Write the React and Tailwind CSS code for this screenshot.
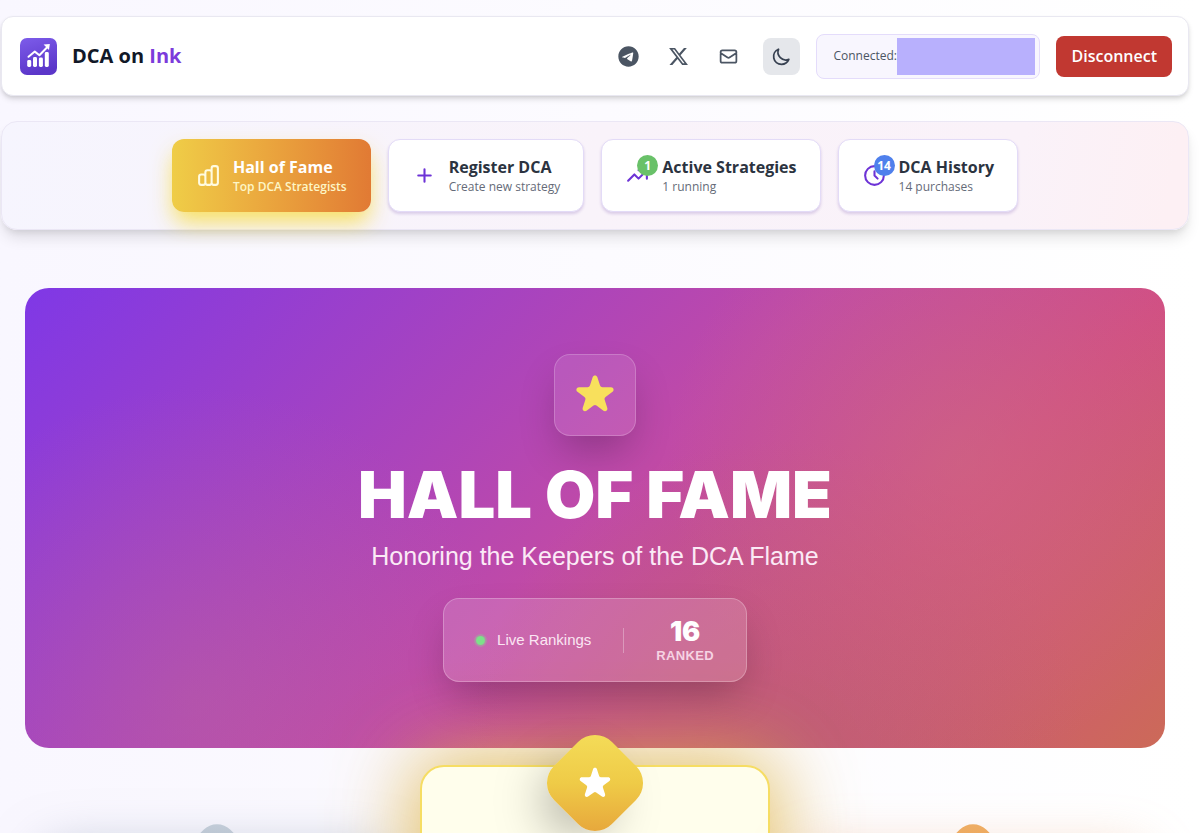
import React from "react";
import { FaTelegram, FaXTwitter } from "react-icons/fa6";

function Outline({ d, className }) {
  return (
    <svg
      viewBox="0 0 24 24"
      fill="none"
      stroke="currentColor"
      strokeWidth="2"
      strokeLinecap="round"
      strokeLinejoin="round"
      className={className}
      aria-hidden="true"
    >
      <path d={d} />
    </svg>
  );
}

function Star({ className }) {
  return (
    <svg viewBox="0 0 20 20" fill="currentColor" className={className} aria-hidden="true">
      <path d="M9.049 2.927c.3-.921 1.603-.921 1.902 0l1.07 3.292a1 1 0 00.95.69h3.462c.969 0 1.371 1.24.588 1.81l-2.8 2.034a1 1 0 00-.364 1.118l1.07 3.292c.3.921-.755 1.688-1.54 1.118l-2.8-2.034a1 1 0 00-1.175 0l-2.8 2.034c-.784.57-1.838-.197-1.539-1.118l1.07-3.292a1 1 0 00-.364-1.118L2.98 8.72c-.783-.57-.38-1.81.588-1.81h3.461a1 1 0 00.951-.69l1.07-3.292z" />
    </svg>
  );
}

const icons = {
  mail: "M3 8l7.89 5.26a2 2 0 002.22 0L21 8M5 19h14a2 2 0 002-2V7a2 2 0 00-2-2H5a2 2 0 00-2 2v10a2 2 0 002 2z",
  moon: "M20.354 15.354A9 9 0 018.646 3.646 9.003 9.003 0 0012 21a9.003 9.003 0 008.354-5.646z",
  chart:
    "M9 19v-6a2 2 0 00-2-2H5a2 2 0 00-2 2v6a2 2 0 002 2h2a2 2 0 002-2zm0 0V9a2 2 0 012-2h2a2 2 0 012 2v10m-6 0a2 2 0 002 2h2a2 2 0 002-2m0 0V5a2 2 0 012-2h2a2 2 0 012 2v14a2 2 0 01-2 2h-2a2 2 0 01-2-2z",
  plus: "M12 6v6m0 0v6m0-6h6m-6 0H6",
  trend: "M13 7h8m0 0v8m0-8l-8 8-4-4-6 6",
  clock: "M12 8v4l3 3m6-3a9 9 0 11-18 0 9 9 0 0118 0z",
};

function Logo() {
  return (
    <svg viewBox="0 0 37 37" className="size-[37px] shrink-0" aria-hidden="true">
      <defs>
        <linearGradient id="logo-fill" x1="0" y1="0" x2="0.3" y2="1">
          <stop offset="0" stopColor="#7d5cea" />
          <stop offset="1" stopColor="#5b36c9" />
        </linearGradient>
      </defs>
      <rect width="37" height="37" rx="7" fill="url(#logo-fill)" />
      <g fill="#fff">
        <rect x="7.2" y="22" width="4" height="7" rx="1.4" />
        <rect x="13" y="19" width="4" height="10" rx="1.4" />
        <rect x="18.9" y="19.5" width="4" height="9.5" rx="1.4" />
        <rect x="24.8" y="14" width="4" height="15" rx="1.4" />
        <path d="M23.6 6.6l6.2-.7-.8 6.2z" />
      </g>
      <path
        d="M8.5 18.8l6.3-5.2 4.6 3.6 8-8.2"
        fill="none"
        stroke="#fff"
        strokeWidth="2"
        strokeLinecap="round"
        strokeLinejoin="round"
      />
    </svg>
  );
}

function IconLink({ label, children }) {
  return (
    <a href="#" aria-label={label} className="flex size-[37px] items-center justify-center rounded-lg text-[#4b5563]">
      {children}
    </a>
  );
}

function Header() {
  return (
    <header className="flex h-20 items-center justify-between rounded-xl border border-[#e9e8f1] bg-white pr-4 pl-[18px] shadow-[0_4px_6px_-1px_rgb(0_0_0/0.12),0_2px_4px_-1px_rgb(0_0_0/0.1)]">
      <div className="flex items-center gap-[15px]">
        <Logo />
        <span className="text-[20px] font-bold text-[#111827]">
          DCA on <span className="text-[#7c3bdb]">Ink</span>
        </span>
      </div>
      <div className="flex items-center gap-4">
        <div className="flex items-center gap-[13px]">
          <IconLink label="Telegram">
            <FaTelegram className="size-[21px]" />
          </IconLink>
          <IconLink label="X">
            <FaXTwitter className="size-[21px]" />
          </IconLink>
          <IconLink label="Email">
            <Outline d={icons.mail} className="size-[21px]" />
          </IconLink>
        </div>
        <button
          type="button"
          aria-label="Dark mode"
          className="flex size-[37px] items-center justify-center rounded-lg bg-[#e5e7eb] text-[#374151]"
        >
          <Outline d={icons.moon} className="size-[21px]" />
        </button>
        <div className="flex h-[45px] items-center rounded-lg border border-[#e4dcfb] bg-[#f8f6fe] pr-1 pl-4">
          <span className="w-16 text-[12px] text-[#4b5563]">Connected:</span>
          <span className="h-[37px] w-[138px] bg-[#b8b0fd]" />
        </div>
        <button type="button" className="h-[41px] rounded-lg bg-[#c13831] px-[15px] text-[16px] font-semibold text-white">
          Disconnect
        </button>
      </div>
    </header>
  );
}

function Tab({ icon, title, note, badge, badgeClass }) {
  return (
    <button
      type="button"
      className="flex h-[73px] items-center gap-3 rounded-xl border border-[#e3dbf7] bg-white px-[23px] text-left shadow-[0_2px_3px_rgb(76_29_149/0.18)]"
    >
      <span className="relative text-[#6d33d6]">
        <Outline d={icons[icon]} className="size-[25px]" />
        {badge && (
          <span
            className={
              "absolute -top-2 -right-2 flex size-[21px] items-center justify-center rounded-full text-[12px] font-bold text-white " +
              badgeClass
            }
          >
            {badge}
          </span>
        )}
      </span>
      <span className="flex flex-col pt-0.5">
        <span className="text-[16px] leading-5 font-bold text-[#2b3340]">{title}</span>
        <span className="text-[12px] leading-5 font-medium text-[#656b78]">{note}</span>
      </span>
    </button>
  );
}

function Tabs() {
  return (
    <nav className="flex h-[109px] items-center justify-center gap-[17px] rounded-2xl border border-[#ebe7f5] bg-[linear-gradient(100deg,#f6f5fe_0%,#f9f3fa_50%,#faf2f9_85%,#fdf0f4_98%)] shadow-[0_10px_15px_-3px_rgb(0_0_0/0.12),0_4px_6px_-2px_rgb(0_0_0/0.08)]">
      <button
        type="button"
        className="flex h-[73px] items-center gap-3 rounded-xl bg-linear-to-r from-[#efcd47] to-[#e17a34] px-6 text-left shadow-[0_12px_22px_-2px_rgb(247_222_80/0.9)]"
      >
        <Outline d={icons.chart} className="size-[25px] text-[#fffbe0]" />
        <span className="flex flex-col pt-0.5">
          <span className="text-[16px] leading-5 font-bold text-white">Hall of Fame</span>
          <span className="text-[12px] leading-5 font-semibold text-[#fdf6c6]">Top DCA Strategists</span>
        </span>
      </button>
      <Tab icon="plus" title="Register DCA" note="Create new strategy" />
      <Tab icon="trend" title="Active Strategies" note="1 running" badge="1" badgeClass="bg-[#69c169]" />
      <Tab icon="clock" title="DCA History" note="14 purchases" badge="14" badgeClass="bg-[#4f80ec]" />
    </nav>
  );
}

function Hero() {
  return (
    <section className="flex flex-col items-center rounded-3xl bg-[radial-gradient(circle_at_82%_38%,rgb(205_120_125/0.4),transparent_30%),radial-gradient(circle_at_66%_100%,rgb(185_100_115/0.7),transparent_35%),radial-gradient(circle_at_15%_90%,rgb(190_110_150/0.35),transparent_30%),linear-gradient(135deg,#7f38e6_0%,#c04aa7_50%,#d14f84_72%,#cc6a58_100%)] py-[66px] font-['Liberation_Sans',Arial,sans-serif]">
      <div className="flex size-[82px] items-center justify-center rounded-2xl border border-white/20 bg-white/10 shadow-[0_20px_40px_-8px_rgb(0_0_0/0.25)]">
        <Star className="size-[50px] text-[#f8e05c]" />
      </div>
      <h1 className="mt-[26px] font-[Inter,sans-serif] text-[65px] leading-[66px] font-black text-white">
        HALL OF FAME
      </h1>
      <p className="mt-3 text-[25px] leading-8 text-[#fbeaf6]">Honoring the Keepers of the DCA Flame</p>
      <div className="mt-[26px] flex h-[84px] items-center rounded-2xl border border-white/25 bg-white/15 px-8 shadow-[0_20px_40px_-8px_rgb(0_0_0/0.25)]">
        <span className="size-[9px] rounded-full bg-[#7ee08a] ring-2 ring-[#7ee08a]/30" />
        <span className="ml-3 text-[15px] text-[#fbe6f3]">Live Rankings</span>
        <span className="mx-8 h-[25px] w-px bg-white/30" />
        <div className="flex flex-col items-center pt-1">
          <span className="font-[Inter,sans-serif] text-[27px] leading-7 font-black text-white">16</span>
          <span className="text-[13px] leading-5 font-bold tracking-wide text-[#f6d3e3]">RANKED</span>
        </div>
      </div>
    </section>
  );
}

function SideCard({ cardClass, medalClass }) {
  return (
    <div className={"mt-[83px] h-80 rounded-3xl border-2 " + cardClass}>
      <div className={"mx-auto -mt-5 size-[66px] rotate-45 rounded-[19px] " + medalClass} />
    </div>
  );
}

function Podium() {
  return (
    <section className="relative mt-[17px] grid grid-cols-3 items-start gap-[27px] px-[17px]">
      <SideCard
        cardClass="border-[#cbd5e1] bg-[#f8fafc] shadow-[0_0_50px_rgb(130_145_165/0.5)]"
        medalClass="bg-linear-to-br from-[#c6cfda] to-[#94a3b8]"
      />
      <div className="h-96 rounded-3xl border-2 border-[#f6dd63] bg-[#fffeec] shadow-[0_0_80px_8px_rgb(220_175_60/0.8)]">
        <div className="mx-auto -mt-[25px] flex size-[82px] rotate-45 items-center justify-center rounded-3xl bg-linear-to-br from-[#f5df5b] via-[#efcb47] to-[#e5a13a] shadow-[0_25px_50px_-12px_rgb(0_0_0/0.35)]">
          <Star className="size-[41px] -rotate-45 text-white" />
        </div>
      </div>
      <SideCard
        cardClass="border-[#fdba74] bg-[#fff7ed] shadow-[0_0_50px_rgb(235_160_110/0.4)]"
        medalClass="bg-linear-to-br from-[#eeb168] to-[#ea8a3a]"
      />
    </section>
  );
}

export default function App() {
  return (
    <div className="h-screen overflow-hidden bg-linear-to-r from-[#f9f7ff] via-[#fcfbff] to-white pt-4 pr-[11px] pl-px font-['Open_Sans','Noto_Sans',sans-serif]">
      <Header />
      <div className="mt-[25px]">
        <Tabs />
      </div>
      <main className="mt-[58px] px-6">
        <Hero />
        <Podium />
      </main>
    </div>
  );
}
